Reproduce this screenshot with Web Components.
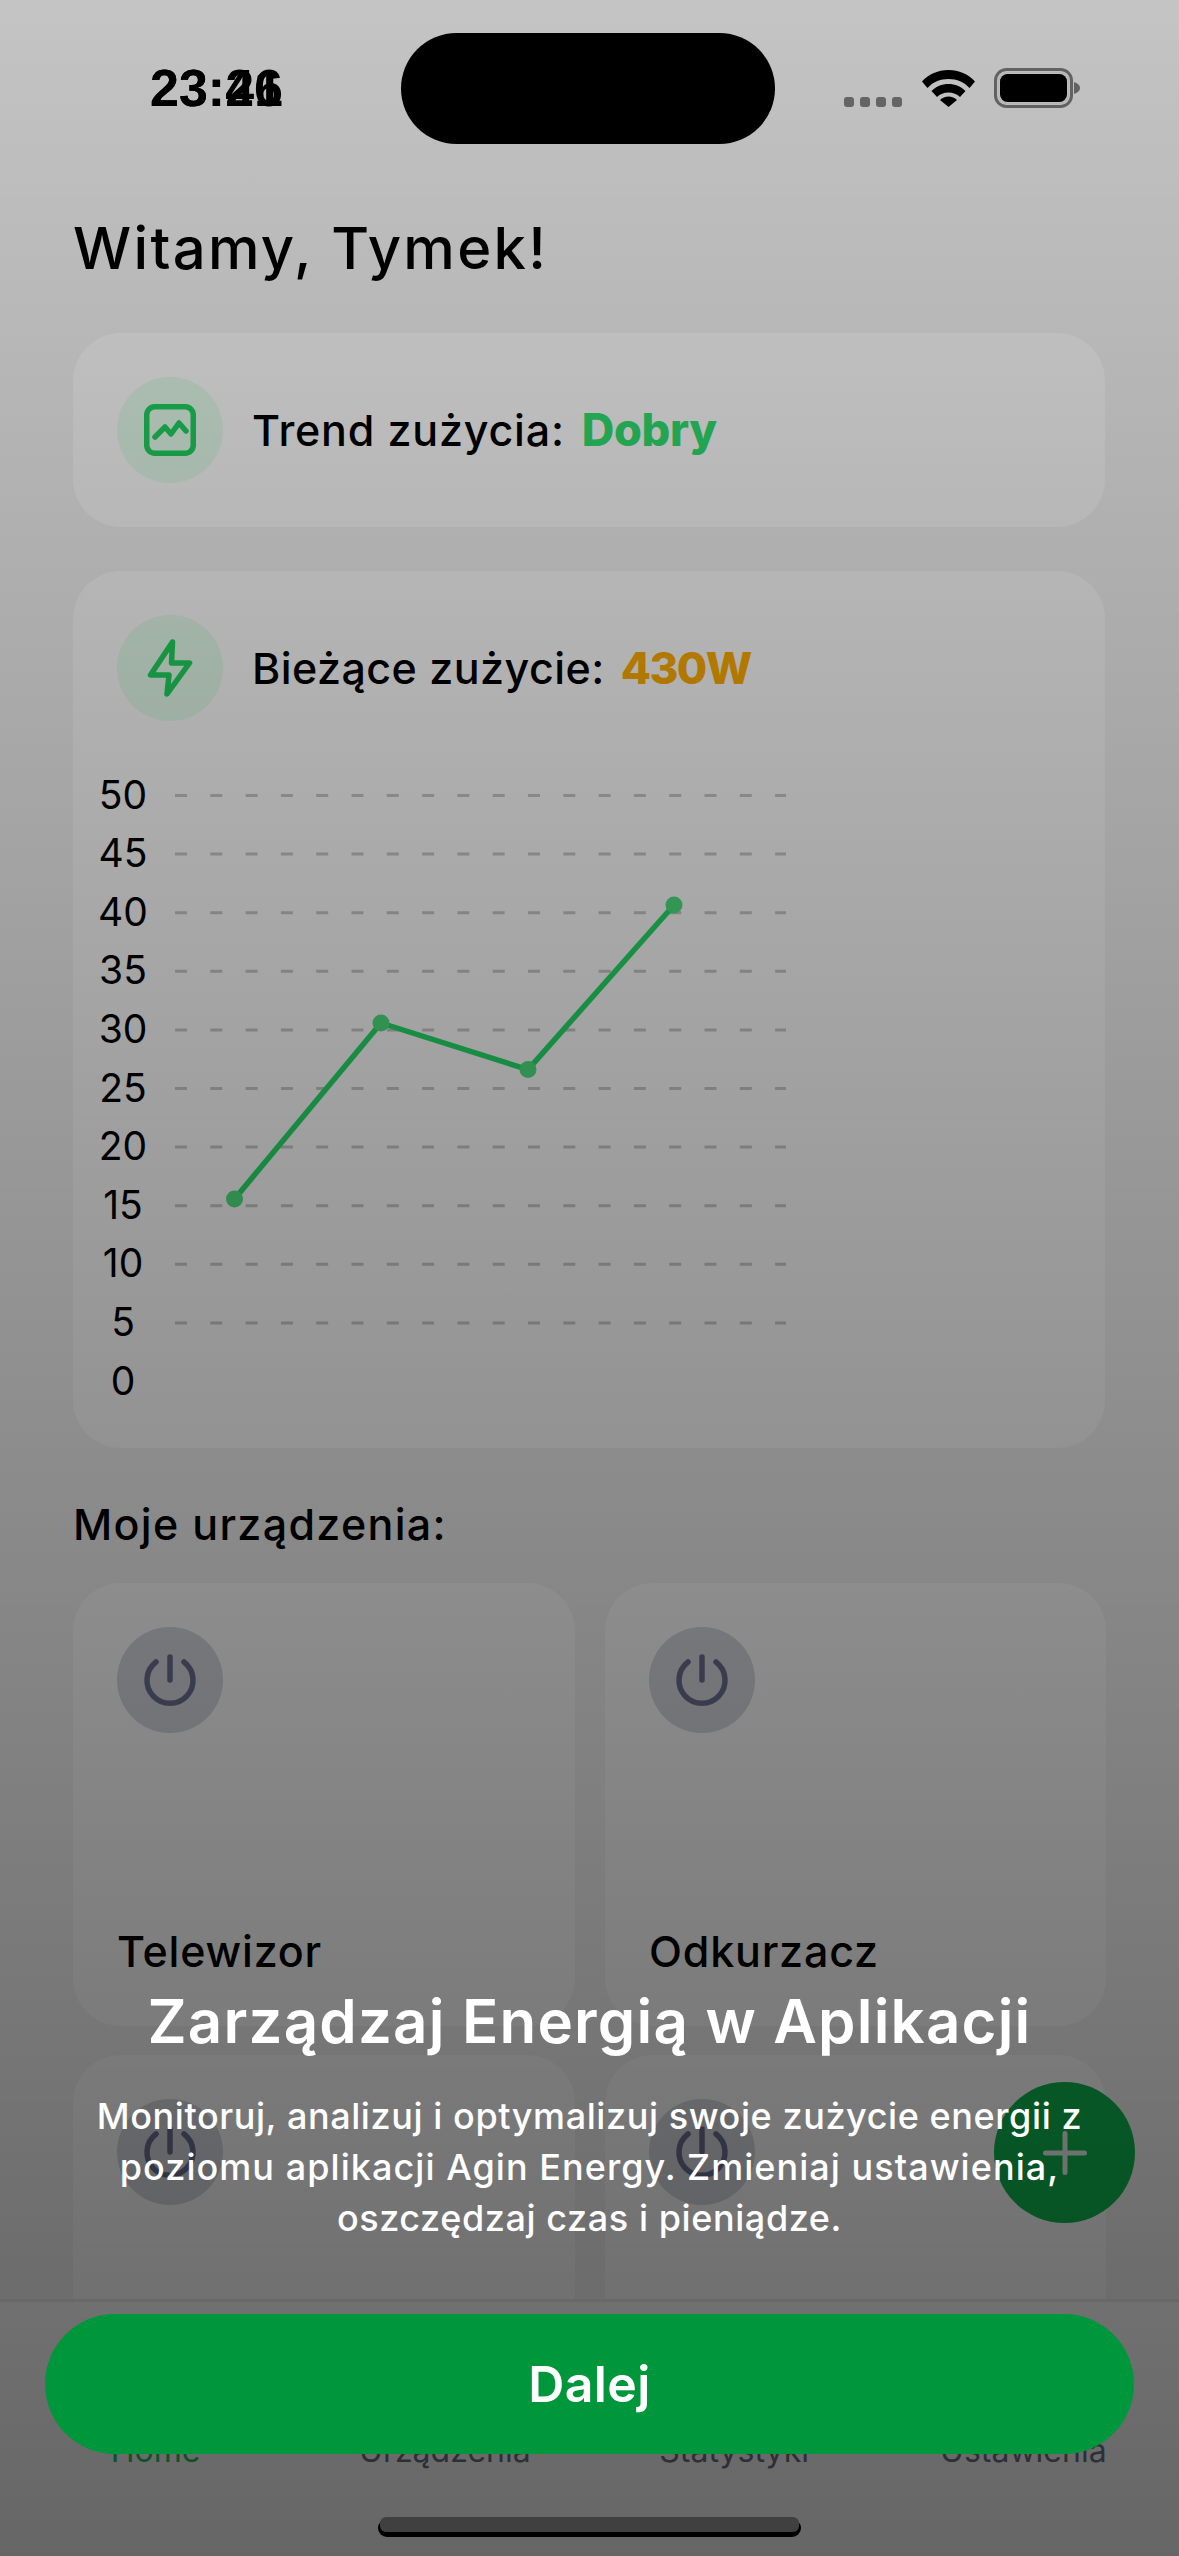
<!DOCTYPE html>
<html lang="pl">
<head>
<meta charset="utf-8">
<title>Agin Energy</title>
<style>
  html, body { margin: 0; padding: 0; }
  body { font-family: Inter, "Noto Sans", sans-serif; color: #000; }
</style>
</head>
<body>
<app-screen>
  <status-bar slot="status"></status-bar>
  <span slot="greeting">Witamy, Tymek!</span>

  <info-card slot="trend" label="Trend zużycia:" value="Dobry" tone="good" style="--label-spacing: 0.8px">
    <svg slot="icon" width="52" height="52" viewBox="0 0 52 52" fill="none" stroke="#21d35f" stroke-width="5.500" stroke-linecap="round" stroke-linejoin="round">
      <rect x="2.750" y="2.750" width="46.500" height="46.500" rx="8"/>
      <path d="M11 33l10-10 6 7 8-11 7 8"/>
    </svg>
  </info-card>

  <usage-card slot="usage" label="Bieżące zużycie:" value="430W">
    <svg slot="icon" width="48" height="63" viewBox="0 0 48 63" fill="none" stroke="#21d35f" stroke-width="5.500" stroke-linecap="round" stroke-linejoin="round">
      <path d="M26.500 5L4.500 38H23L21 57L43.500 26H25.500z"/>
    </svg>
  </usage-card>

  <span slot="devices-title">Moje urządzenia:</span>
  <device-card slot="devices" name="Telewizor"></device-card>
  <device-card slot="devices" name="Odkurzacz"></device-card>
  <device-card slot="devices" name=""></device-card>
  <device-card slot="devices" name=""></device-card>

  <tab-bar slot="tabs"></tab-bar>
  <add-button slot="fab"></add-button>

  <intro-overlay slot="overlay" heading="Zarządzaj Energią w Aplikacji" action="Dalej">
    Monitoruj, analizuj i optymalizuj swoje zużycie energii z<br><span style="letter-spacing: 1.05px">poziomu aplikacji Agin Energy. Zmieniaj ustawienia,</span><br>oszczędzaj czas i pieniądze.
  </intro-overlay>
</app-screen>

<script>
class AppScreen extends HTMLElement {
  constructor() {
    super();
    this.attachShadow({ mode: "open" });
    this.shadowRoot.innerHTML = `
    <style>
      :host { display: block; position: relative; width: 1179px; height: 2556px; overflow: hidden; background: #f5f5f5; }
      .content { display: flex; flex-direction: column; padding: 0 74px 0 73px; }
      .greeting { height: 118px; font-size: 58px; font-weight: 500; line-height: 66px; letter-spacing: 2.3px; }
      .stack { display: flex; flex-direction: column; gap: 44px; }
      .section-title { height: 135px; box-sizing: border-box; padding-top: 51px; font-size: 43px; font-weight: 500; line-height: 50px; letter-spacing: 1.3px; }
      .grid { display: grid; grid-template-columns: 502px 501px; grid-auto-rows: 443px; column-gap: 30px; row-gap: 29px; }
    </style>
    <slot name="status"></slot>
    <div class="content">
      <div class="greeting"><slot name="greeting"></slot></div>
      <div class="stack">
        <slot name="trend"></slot>
        <slot name="usage"></slot>
      </div>
      <div class="section-title"><slot name="devices-title"></slot></div>
      <div class="grid"><slot name="devices"></slot></div>
    </div>
    <slot name="tabs"></slot>
    <slot name="fab"></slot>
    <slot name="overlay"></slot>
    `;
  }
}

class StatusBar extends HTMLElement {
  constructor() {
    super();
    this.attachShadow({ mode: "open" });
    this.shadowRoot.innerHTML = `
    <style>
      :host { display: flex; align-items: flex-start; height: 215px; box-sizing: border-box; padding: 33px 98px 0 150px; }
      .time { display: grid; width: 252px; margin-top: 26px; font-family: "Liberation Sans", sans-serif; font-size: 52px; line-height: 58px; font-weight: 700; }
      .time span { grid-area: 1 / 1; }
      .island { width: 375px; height: 111px; border-radius: 56px; background: #000; }
      .right { display: flex; align-items: flex-start; margin-left: 69px; }
      .dots { display: flex; gap: 6px; margin-top: 64px; }
      .dots i { width: 10px; height: 10px; border-radius: 3px; background: #808080; }
      .wifi { margin: 36px 0 0 20px; }
      .battery { margin: 35px 0 0 19px; }
    </style>
    <div class="time"><span>23:26</span><span>23:41</span></div>
    <div class="island"></div>
    <div class="right">
      <div class="dots"><i></i><i></i><i></i><i></i></div>
      <svg class="wifi" width="53" height="38" viewBox="0 0 53 38">
        <path d="M0 12.500C7 5 16 1 26.500 1S46 5 53 12.500L47.500 19C42 13 35 10 26.500 10S11 13 5.500 19z"/>
        <path d="M9.500 22C14 17.500 20 15 26.500 15S39 17.500 43.500 22L38 28C35 25 31 23.500 26.500 23.500S18 25 15 28z"/>
        <path d="M18 31c2.300-2.200 5.200-3.500 8.500-3.500S32.700 28.800 35 31l-8.500 7z"/>
      </svg>
      <svg class="battery" width="87" height="40" viewBox="0 0 87 40">
        <rect x="1.500" y="1.500" width="76" height="37" rx="11" fill="none" stroke="#7c7c7c" stroke-width="3"/>
        <rect x="4.500" y="4.500" width="70" height="31" rx="9" fill="none" stroke="#e6e6e6" stroke-width="1.500"/>
        <rect x="6" y="6" width="67" height="28" rx="7.500"/>
        <path d="M80 14c3 1 6 3 6 6s-3 5-6 6z" fill="#7c7c7c"/>
      </svg>
    </div>
    `;
  }
}

class InfoCard extends HTMLElement {
  constructor() {
    super();
    this.attachShadow({ mode: "open" });
    const tone = this.getAttribute("tone") == "good" ? "#2fe06f" : "#ffad00";
    this.shadowRoot.innerHTML = `
    <style>
      :host { display: flex; align-items: center; gap: 29px; padding: 44px; background: #fff; border-radius: 48px; }
      .icon { display: flex; align-items: center; justify-content: center; width: 106px; height: 106px; border-radius: 50%; background: #e6feee; }
      .label { font-size: 43px; font-weight: 500; letter-spacing: var(--label-spacing, 0.5px); line-height: 50px; }
      .value { margin-left: 17px; font-size: 45px; font-weight: 800; line-height: 50px; letter-spacing: -0.3px; color: ${tone}; }
    </style>
    <div class="icon"><slot name="icon"></slot></div>
    <div><span class="label">${this.getAttribute("label")}</span><span class="value">${this.getAttribute("value")}</span></div>
    `;
  }
}

class UsageCard extends HTMLElement {
  constructor() {
    super();
    this.attachShadow({ mode: "open" });
    // y axis goes 50..0, the grid has no line at 0
    const ticks = [50, 45, 40, 35, 30, 25, 20, 15, 10, 5, 0];
    const top = 74.5;
    const step = 58.6;
    let grid = "";
    ticks.forEach((t, i) => {
      const y = top + i * step;
      if (t > 0) grid += `<line x1="102" x2="713" y1="${y}" y2="${y}"/>`;
    });
    let labels = "";
    ticks.forEach((t, i) => {
      labels += `<text x="50" y="${top + i * step + 13}">${t}</text>`;
    });
    const pts = [[161.5, 478], [308, 302], [455, 348.6], [601, 184]];
    const dots = pts.map(p => `<circle cx="${p[0]}" cy="${p[1]}" r="8.500"/>`).join("");
    this.shadowRoot.innerHTML = `
    <style>
      :host { display: block; height: 877px; background: #fff; border-radius: 48px; }
      .head { display: flex; align-items: center; gap: 29px; padding: 44px 44px 0; }
      .icon { display: flex; align-items: center; justify-content: center; width: 106px; height: 106px; border-radius: 50%; background: #e6feee; }
      .label { font-size: 43px; font-weight: 500; letter-spacing: 0.45px; line-height: 50px; }
      .value { margin-left: 16px; font-size: 44px; font-weight: 800; line-height: 50px; color: #ffad00; letter-spacing: -1.5px; }
      svg.chart { display: block; }
      .grid line { stroke: #c9c9c9; stroke-width: 3; stroke-dasharray: 12 23.300; }
      .labels text { font-family: Inter, sans-serif; font-size: 39px; text-anchor: middle; fill: #000; }
      .line { fill: none; stroke: #26dc68; stroke-width: 5.500; stroke-linejoin: round; }
      .dots circle { fill: #4ee37e; }
    </style>
    <div class="head">
      <div class="icon"><slot name="icon"></slot></div>
      <div><span class="label">${this.getAttribute("label")}</span><span class="value">${this.getAttribute("value")}</span></div>
    </div>
    <svg class="chart" width="1032" height="727" viewBox="0 0 1032 727">
      <g class="grid">${grid}</g>
      <g class="labels">${labels}</g>
      <polyline class="line" points="${pts.map(p => p.join(",")).join(" ")}"/>
      <g class="dots">${dots}</g>
    </svg>
    `;
  }
}

class DeviceCard extends HTMLElement {
  constructor() {
    super();
    this.attachShadow({ mode: "open" });
    this.shadowRoot.innerHTML = `
    <style>
      :host { display: flex; flex-direction: column; justify-content: space-between; box-sizing: border-box; padding: 44px 44px 50px; background: #fff; border-radius: 48px; }
      .icon { display: flex; align-items: center; justify-content: center; width: 106px; height: 106px; border-radius: 50%; background: #d8dae0; }
      .name { font-size: 43px; font-weight: 500; line-height: 50px; letter-spacing: 0.8px; }
    </style>
    <div class="icon">
      <svg width="56" height="56" viewBox="0 0 56 56" fill="none" stroke="#6b7091" stroke-width="5.500" stroke-linecap="round">
        <path d="M28 5v23"/>
        <path d="M14 10a23 23 0 1 0 28 0"/>
      </svg>
    </div>
    <div class="name">${this.getAttribute("name")}</div>
    `;
  }
}

class TabBar extends HTMLElement {
  constructor() {
    super();
    this.attachShadow({ mode: "open" });
    this.shadowRoot.innerHTML = `
    <style>
      :host { position: absolute; left: 0; right: 0; top: 2299px; height: 257px; box-sizing: border-box; display: grid; grid-template-columns: repeat(4, 1fr); padding: 129px 11px 0; background: #fff; border-top: 3px solid #ececec; }
      div { text-align: center; font-size: 32px; line-height: 40px; color: #6b7280; }
      .active { color: #22c55e; }
    </style>
    <div class="active">Home</div>
    <div>Urządzenia</div>
    <div>Statystyki</div>
    <div>Ustawienia</div>
    `;
  }
}

class AddButton extends HTMLElement {
  constructor() {
    super();
    this.attachShadow({ mode: "open" });
    this.shadowRoot.innerHTML = `
    <style>
      :host { position: absolute; left: 994px; top: 2082px; width: 141px; height: 141px; display: flex; align-items: center; justify-content: center; border-radius: 50%; background: #0fb850; }
    </style>
    <svg width="44" height="44" viewBox="0 0 44 44" stroke="#e8f8ee" stroke-width="5" stroke-linecap="round"><path d="M22 2.500v39M2.500 22h39"/></svg>
    `;
  }
}

class IntroOverlay extends HTMLElement {
  constructor() {
    super();
    this.attachShadow({ mode: "open" });
    this.shadowRoot.innerHTML = `
    <style>
      :host { position: absolute; inset: 0; display: flex; flex-direction: column; align-items: center; justify-content: flex-end; padding-bottom: 102px; background: linear-gradient(rgba(0,0,0,0.2), rgba(0,0,0,0.6)); color: #fff; text-align: center; }
      h2 { margin: 0; font-size: 60px; font-weight: 600; line-height: 70px; letter-spacing: 1.2px; }
      p { margin: 35px 0 0; font-size: 36px; font-weight: 500; line-height: 51px; letter-spacing: 0.58px; }
      button { display: block; width: 1089px; height: 140px; margin-top: 70px; border: 0; border-radius: 70px; background: #00973c; color: #fff; font: 600 50px Inter, sans-serif; letter-spacing: 0.4px; }
      .home { position: absolute; left: 378px; top: 2519px; width: 423px; height: 18px; border-radius: 9px; background: #000; }
      .home::after { content: ""; position: absolute; left: 2px; right: 2px; top: -2px; height: 15px; border-radius: 6px; background: #404040; }
    </style>
    <h2>${this.getAttribute("heading")}</h2>
    <p><slot></slot></p>
    <button>${this.getAttribute("action")}</button>
    <div class="home"></div>
    `;
  }
}

window.customElements.define("app-screen", AppScreen);
window.customElements.define("status-bar", StatusBar);
window.customElements.define("info-card", InfoCard);
window.customElements.define("usage-card", UsageCard);
window.customElements.define("device-card", DeviceCard);
window.customElements.define("tab-bar", TabBar);
window.customElements.define("add-button", AddButton);
window.customElements.define("intro-overlay", IntroOverlay);
</script>
</body>
</html>
